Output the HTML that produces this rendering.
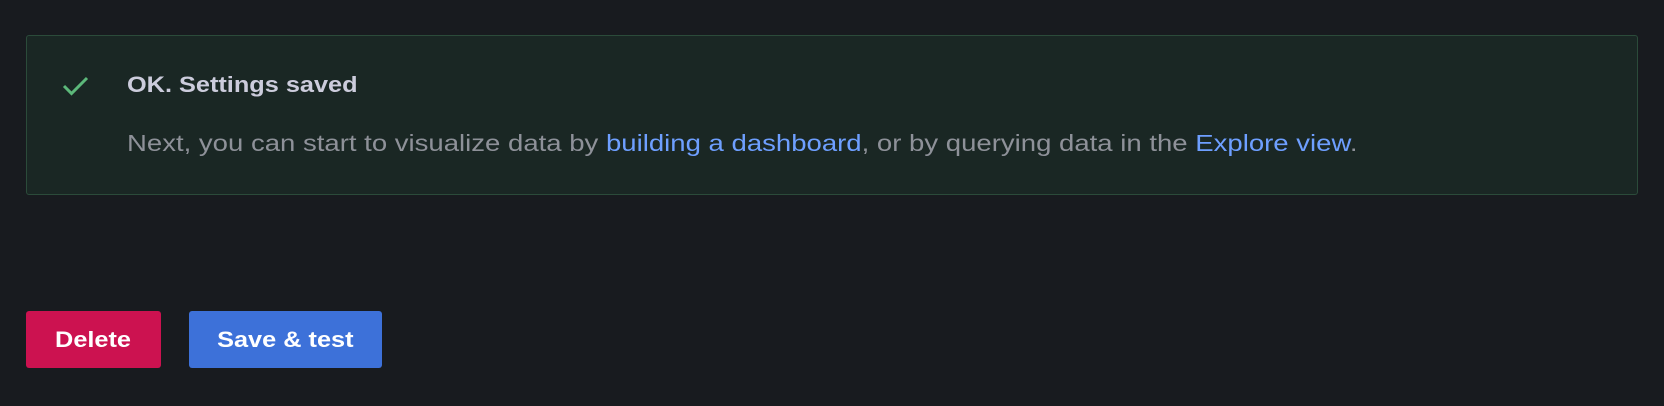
<!DOCTYPE html>
<html><head><meta charset="utf-8"><style>
body{margin:0;width:1664px;height:406px;background:#181b1f;font-family:"Liberation Sans",sans-serif;position:relative;overflow:hidden}
.box{position:absolute;left:26px;top:35px;width:1610px;height:158px;background:#1a2724;border:1px solid #2b4b3a;border-radius:3px}
.t{position:absolute;left:127px;top:72px;font-size:22px;font-weight:bold;color:#ccccdc;white-space:nowrap;transform:scaleX(1.15);transform-origin:left}
.b{position:absolute;left:127px;top:130px;font-size:23px;color:#8e9199;white-space:nowrap;transform:scaleX(1.197);transform-origin:left}
.b a{color:#6e9fff;text-decoration:none}
.btn{position:absolute;top:311px;height:57px;line-height:57px;color:#fff;font-size:22px;font-weight:bold;text-align:center;border-radius:3px}
.btn span{display:inline-block;transform:scaleX(1.15)}
</style></head><body>
<div class="box"></div>
<svg style="position:absolute;left:62px;top:75px" width="28" height="22" viewBox="0 0 28 22"><path d="M2 11 L9.5 18.5 L25 3" fill="none" stroke="#5cb87a" stroke-width="3"/></svg>
<div class="t">OK. Settings saved</div>
<div class="b">Next, you can start to visualize data by <a>building a dashboard</a>, or by querying data in the <a>Explore view</a>.</div>
<div class="btn" style="left:26px;width:135px;background:#cc1250"><span>Delete</span></div>
<div class="btn" style="left:189px;width:193px;background:#3d71d9"><span>Save &amp; test</span></div>
</body></html>
